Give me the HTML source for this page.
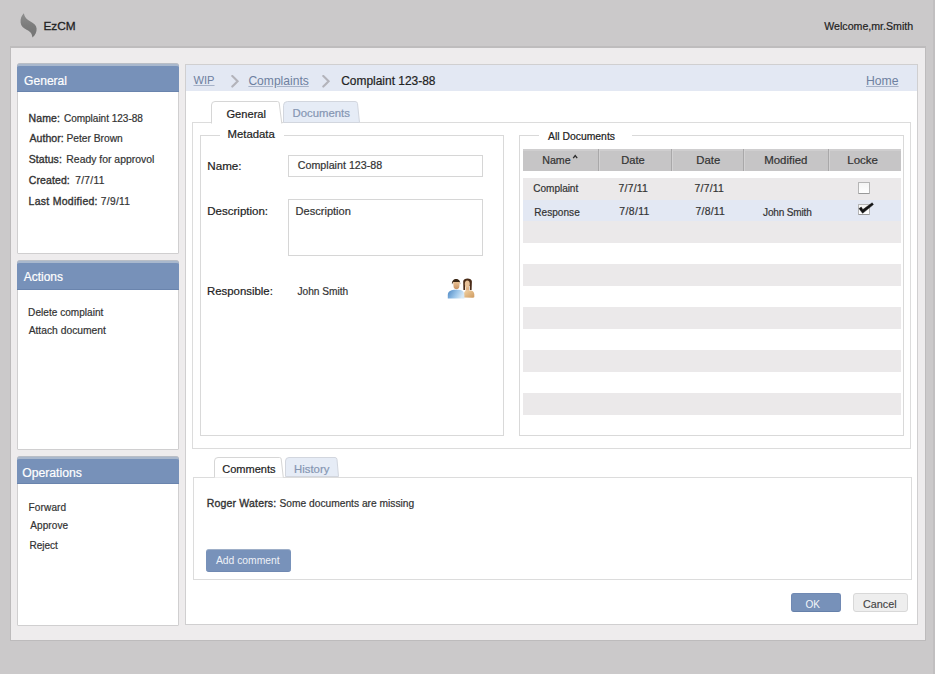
<!DOCTYPE html>
<html><head><meta charset="utf-8">
<style>
*{box-sizing:border-box;margin:0;padding:0}
html,body{width:935px;height:674px;overflow:hidden}
body{background:#cbc9ca;font-family:"Liberation Sans",sans-serif;color:#222;position:relative}
.a{position:absolute}
.t{position:absolute;white-space:nowrap;line-height:1}
.bp{display:inline-block;width:0;height:0}
#main{left:10px;top:46px;width:916px;height:595px;background:#eeeced;border:1px solid #bdbbbc;border-top:2px solid #bebcbd}
.box{position:absolute;background:#fff;border:1px solid #d0cfd0;border-radius:3px 3px 1px 1px}
.hdr{position:absolute;background:#7791b9;border-radius:3px 3px 0 0;border-top:2px solid #a9b8cd;border-bottom:1px solid #6a84ad;box-shadow:0 -1px 0 #b9bec6}
.tabA{position:absolute;background:#fff;border:1px solid #d9d9d9;border-bottom:none;border-radius:4px 4px 0 0}
.tabI{position:absolute;background:#e2e8f2;border:1px solid #d3d6dc;border-bottom:none;border-radius:4px 4px 0 0}
.fs{position:absolute;border:1px solid #d9d9d9}
.stripe{position:absolute;left:523px;width:378px;height:21.5px;background:#ebe9ea}
</style></head><body>
<svg class="a" style="left:0;top:0" width="50" height="45" viewBox="0 0 50 45">
<defs><linearGradient id="lg" x1="0" y1="0" x2="0" y2="1"><stop offset="0" stop-color="#8e8e8e"/><stop offset="0.5" stop-color="#7c7c7c"/><stop offset="1" stop-color="#747474"/></linearGradient></defs>
<path d="M23.8 13.3 C21.5 15.5 20.3 19 20.6 22.5 C20.9 26 23.5 28.3 27 30 C30 31.5 32.3 33.5 32.4 37.6 C35.2 35.5 36.9 32 36.6 28.5 C36.3 25.3 34 23.3 30.5 21.5 C27 19.8 24.5 17.5 23.8 13.3 Z" fill="url(#lg)"/>
</svg>
<div class="a" style="left:933px;top:0;width:2px;height:674px;background:#c1bfc0"></div>
<div id="main" class="a"></div>

<div class="box" style="left:17px;top:63px;width:162px;height:191px"></div>
<div class="hdr" style="left:17px;top:64px;width:162px;height:28px"></div>
<div class="box" style="left:17px;top:260px;width:162px;height:190px"></div>
<div class="hdr" style="left:17px;top:261px;width:162px;height:29px"></div>
<div class="box" style="left:17px;top:456px;width:162px;height:170px"></div>
<div class="hdr" style="left:17px;top:457px;width:162px;height:27px"></div>

<div class="box" style="left:185px;top:64px;width:733px;height:561px;border-radius:0"></div>
<div class="a" style="left:186px;top:65px;width:731px;height:26px;background:#e3e8f3"></div>
<svg class="a" style="left:230px;top:75px" width="11" height="13"><path d="M2.3 1 Q5 3.5 7.6 6.3 Q5 9 2.3 11.6" stroke="#b3b3ba" stroke-width="2.1" fill="none" stroke-linecap="round"/></svg>
<svg class="a" style="left:321px;top:75px" width="11" height="13"><path d="M2.3 1 Q5 3.5 7.6 6.3 Q5 9 2.3 11.6" stroke="#b3b3ba" stroke-width="2.1" fill="none" stroke-linecap="round"/></svg>

<div class="box" style="left:192px;top:122px;width:719px;height:327px;border-radius:0;border-color:#dcdcdc"></div>
<svg class="a" style="left:0;top:0" width="400" height="130">
<path d="M211.5 123.5 L211.5 105 Q211.5 101.5 215 101.5 L277.5 101.5 Q279 101.5 279.2 103 L281.8 123.5" fill="#fff" stroke="#d6d6d6" stroke-width="1"/>
<path d="M283.5 122.5 L283.5 105.5 Q283.5 101.5 287.5 101.5 L355 101.5 Q357.3 101.5 357.5 103.5 L359.5 122.5 Z" fill="#e6ecf6" stroke="#d2d6de" stroke-width="1"/>
</svg>

<div class="fs" style="left:200px;top:135px;width:304px;height:301px"></div>
<div class="a" style="left:220px;top:130px;width:64px;height:10px;background:#fff"></div>
<div class="a" style="left:288px;top:155px;width:195px;height:22px;border:1px solid #d6d6d6"></div>
<div class="a" style="left:288px;top:199px;width:195px;height:57px;border:1px solid #d6d6d6"></div>
<svg class="a" style="left:440px;top:272px" width="40" height="32" viewBox="0 0 40 32">
<defs>
<linearGradient id="mb" x1="0" y1="0" x2="1" y2="0.3"><stop offset="0" stop-color="#4d88c4"/><stop offset="0.6" stop-color="#9cc6ea"/><stop offset="1" stop-color="#d6e8f6"/></linearGradient>
<linearGradient id="wb" x1="0" y1="0" x2="1" y2="1"><stop offset="0" stop-color="#f1d3a6"/><stop offset="1" stop-color="#cf9a5e"/></linearGradient>
<linearGradient id="mf" x1="0" y1="0" x2="0" y2="1"><stop offset="0" stop-color="#eac294"/><stop offset="1" stop-color="#c89262"/></linearGradient>
</defs>
<path d="M23.2 9.5 C23.2 5.6 31.9 5.6 31.9 9.5 L31.6 18 L29.8 18 L29.8 14 L25 14 L25 18 L23.4 18 Z" fill="#4a2c18"/>
<rect x="25.6" y="13" width="3.4" height="5.8" fill="#e2b486"/><ellipse cx="27.3" cy="12" rx="2.5" ry="3.5" fill="#e9c39a"/>
<path d="M24 25.5 L24 21.5 C24 19.2 26 18.3 28.8 18.3 C32.5 18.3 34.3 19.8 34.3 22.5 L34.3 25 C34.3 25.5 33.5 25.8 32 25.8 Z" fill="url(#wb)"/>
<path d="M12 12.5 C11 5.5 21 5 20.2 12.5 L19.6 10.2 L13 10.2 Z" fill="#3b2816"/>
<path d="M13.2 10 L19.7 10 L19.4 14.2 C19.2 16.4 18 17.2 16.5 17.2 C15 17.2 13.6 16.4 13.5 14.2 Z" fill="url(#mf)"/>
<path d="M7.8 26.5 L7.8 23 C7.8 19.8 10.5 18 14 17.8 L19 17.8 C22.5 18 24.4 19.8 24.4 23 L24.4 26.5 Z" fill="url(#mb)"/>
</svg>

<div class="fs" style="left:519px;top:135px;width:385px;height:301px"></div>
<div class="a" style="left:539px;top:130px;width:93px;height:10px;background:#fff"></div>
<div class="a" style="left:523px;top:149px;width:378px;height:22px;background:#c6c5c6;border-top:2px solid #cfcecf"></div>
<div class="a" style="left:598px;top:149px;width:1px;height:22px;background:#a9a8a9"></div><div class="a" style="left:599px;top:149px;width:1px;height:22px;background:#d2d1d2"></div>
<div class="a" style="left:671px;top:149px;width:1px;height:22px;background:#a9a8a9"></div><div class="a" style="left:672px;top:149px;width:1px;height:22px;background:#d2d1d2"></div>
<div class="a" style="left:743px;top:149px;width:1px;height:22px;background:#a9a8a9"></div><div class="a" style="left:744px;top:149px;width:1px;height:22px;background:#d2d1d2"></div>
<div class="a" style="left:828px;top:149px;width:1px;height:22px;background:#a9a8a9"></div><div class="a" style="left:829px;top:149px;width:1px;height:22px;background:#d2d1d2"></div>
<svg class="a" style="left:572px;top:154px" width="7" height="6"><path d="M1.2 4.2 L3.2 1.6 L5.2 4.2" stroke="#2a2a2a" stroke-width="1.3" fill="none"/></svg>

<div class="stripe" style="top:178px"></div>
<div class="stripe" style="top:199.5px;background:#e3e8f3"></div>
<div class="stripe" style="top:221px"></div>
<div class="stripe" style="top:264px"></div>
<div class="stripe" style="top:307px"></div>
<div class="stripe" style="top:350px"></div>
<div class="stripe" style="top:393px"></div>
<div class="a" style="left:858px;top:182px;width:12px;height:12px;border:1px solid #b5b5b5;border-bottom-color:#999;background:linear-gradient(#f4f4f4,#fff);border-radius:1px"></div>
<div class="a" style="left:858px;top:204px;width:12px;height:11px;border:1px solid #b5b5b5;border-bottom-color:#999;background:linear-gradient(#f4f4f4,#fff);border-radius:1px"></div>
<svg class="a" style="left:857px;top:201px" width="18" height="14"><path d="M2 7.6 L4.3 6 L5.8 8.6 L15.2 1.8 L16.4 3.6 L5.6 12.3 Z" fill="#151515" stroke="#151515" stroke-width="0.5" stroke-linejoin="round"/></svg>

<div class="box" style="left:193px;top:477px;width:719px;height:103px;border-radius:0;border-color:#dcdcdc"></div>
<svg class="a" style="left:0;top:440px" width="400" height="45">
<path d="M214.5 37.5 L214.5 21 Q214.5 17.5 218 17.5 L279.5 17.5 Q281 17.5 281.2 19 L283.3 37.5" fill="#fff" stroke="#d6d6d6" stroke-width="1"/>
<path d="M285.5 36.5 L285.5 21 Q285.5 17.5 289 17.5 L335 17.5 Q336.8 17.5 337 19.5 L338.5 36.5 Z" fill="#e6ecf6" stroke="#d2d6de" stroke-width="1"/>
</svg>
<div class="a" style="left:206px;top:549px;width:85px;height:23px;background:#7892ba;border-radius:3px;border-top:1px solid #9eafc8;border-bottom:1px solid #7089b2"></div>
<div class="a" style="left:791px;top:593px;width:50px;height:19px;background:#7791b9;border-radius:3px;border:1px solid #7089b3;border-bottom-color:#6580aa"></div>
<div class="a" style="left:853px;top:593px;width:55px;height:19px;background:#eeeeee;border:1px solid #d8d8d8;border-radius:3px"></div>
<div id="ezcm" class="t" style="left:43.38px;top:21.00px;font-size:11.80px;color:#222;-webkit-text-stroke:0.3px #222">EzCM<span class="bp"></span></div>
<div id="welcome" class="t" style="left:824.28px;top:21.01px;font-size:10.62px;color:#222;-webkit-text-stroke:0.2px #222">Welcome,mr.Smith<span class="bp"></span></div>
<div id="hGeneral" class="t" style="left:24.10px;top:75.00px;font-size:12.07px;color:#fff;-webkit-text-stroke:0.2px #fff">General<span class="bp"></span></div>
<div id="hActions" class="t" style="left:23.74px;top:272.00px;font-size:11.96px;color:#fff;-webkit-text-stroke:0.2px #fff">Actions<span class="bp"></span></div>
<div id="hOps" class="t" style="left:22.20px;top:467.00px;font-size:12.21px;color:#fff;-webkit-text-stroke:0.2px #fff">Operations<span class="bp"></span></div>
<div id="lName" class="t" style="left:28.54px;top:113.01px;font-size:10.50px;letter-spacing:0.10px;color:#333;-webkit-text-stroke:0.35px #333">Name:<span class="bp"></span></div>
<div id="vName" class="t" style="left:63.90px;top:114.01px;font-size:10.05px;letter-spacing:-0.02px;color:#333;-webkit-text-stroke:0.2px #333">Complaint 123-88<span class="bp"></span></div>
<div id="lAuthor" class="t" style="left:29.44px;top:133.01px;font-size:10.50px;letter-spacing:0.07px;color:#333;-webkit-text-stroke:0.35px #333">Author:<span class="bp"></span></div>
<div id="vAuthor" class="t" style="left:66.42px;top:134.00px;font-size:10.25px;color:#333;-webkit-text-stroke:0.2px #333">Peter Brown<span class="bp"></span></div>
<div id="lStatus" class="t" style="left:28.74px;top:154.01px;font-size:10.50px;letter-spacing:0.07px;color:#333;-webkit-text-stroke:0.35px #333">Status:<span class="bp"></span></div>
<div id="vStatus" class="t" style="left:66.36px;top:155.00px;font-size:10.42px;color:#333;-webkit-text-stroke:0.2px #333">Ready for approvol<span class="bp"></span></div>
<div id="lCreated" class="t" style="left:28.74px;top:175.01px;font-size:10.50px;letter-spacing:0.11px;color:#333;-webkit-text-stroke:0.35px #333">Created:<span class="bp"></span></div>
<div id="vCreated" class="t" style="left:75.16px;top:176.00px;font-size:10.20px;letter-spacing:0.32px;color:#333;-webkit-text-stroke:0.2px #333">7/7/11<span class="bp"></span></div>
<div id="lLast" class="t" style="left:28.54px;top:196.01px;font-size:10.50px;letter-spacing:0.28px;color:#333;-webkit-text-stroke:0.35px #333">Last Modified:<span class="bp"></span></div>
<div id="vLast" class="t" style="left:100.82px;top:197.00px;font-size:10.20px;letter-spacing:0.32px;color:#333;-webkit-text-stroke:0.2px #333">7/9/11<span class="bp"></span></div>
<div id="delete" class="t" style="left:28.12px;top:308.00px;font-size:10.05px;letter-spacing:0.03px;color:#333;-webkit-text-stroke:0.2px #333">Delete complaint<span class="bp"></span></div>
<div id="attach" class="t" style="left:28.64px;top:326.01px;font-size:10.30px;color:#333;-webkit-text-stroke:0.2px #333">Attach document<span class="bp"></span></div>
<div id="forward" class="t" style="left:28.54px;top:503.01px;font-size:10.05px;letter-spacing:0.13px;color:#333;-webkit-text-stroke:0.2px #333">Forward<span class="bp"></span></div>
<div id="approve" class="t" style="left:30.24px;top:521.00px;font-size:10.05px;letter-spacing:0.08px;color:#333;-webkit-text-stroke:0.2px #333">Approve<span class="bp"></span></div>
<div id="reject" class="t" style="left:29.54px;top:541.00px;font-size:10.05px;letter-spacing:-0.03px;color:#333;-webkit-text-stroke:0.2px #333">Reject<span class="bp"></span></div>
<div id="wip" class="t" style="left:193.46px;top:75.00px;font-size:11.17px;color:#6e80a0;text-decoration:underline;text-decoration-color:#a6b2c8">WIP<span class="bp"></span></div>
<div id="complaints" class="t" style="left:248.38px;top:75.01px;font-size:12.08px;color:#6e80a0;text-decoration:underline;text-decoration-color:#a6b2c8">Complaints<span class="bp"></span></div>
<div id="crumb" class="t" style="left:341.16px;top:76.01px;font-size:11.96px;color:#222;-webkit-text-stroke:0.2px #222">Complaint 123-88<span class="bp"></span></div>
<div id="home" class="t" style="left:866.00px;top:75.01px;font-size:12.22px;color:#6e80a0;text-decoration:underline;text-decoration-color:#a6b2c8">Home<span class="bp"></span></div>
<div id="tGeneral" class="t" style="left:226.46px;top:109.01px;font-size:11.11px;color:#222;-webkit-text-stroke:0.2px #222">General<span class="bp"></span></div>
<div id="tDocs" class="t" style="left:292.54px;top:108.01px;font-size:11.35px;color:#8596b3;-webkit-text-stroke:0.2px #8596b3">Documents<span class="bp"></span></div>
<div id="metadata" class="t" style="left:227.46px;top:129.00px;font-size:11.37px;color:#222;-webkit-text-stroke:0.2px #222">Metadata<span class="bp"></span></div>
<div id="fName" class="t" style="left:207.26px;top:160.00px;font-size:11.66px;color:#222;-webkit-text-stroke:0.2px #222">Name:<span class="bp"></span></div>
<div id="fNameV" class="t" style="left:297.80px;top:160.01px;font-size:10.70px;color:#333;-webkit-text-stroke:0.2px #333">Complaint 123-88<span class="bp"></span></div>
<div id="fDesc" class="t" style="left:207.26px;top:206.00px;font-size:11.53px;color:#222;-webkit-text-stroke:0.2px #222">Description:<span class="bp"></span></div>
<div id="fDescV" class="t" style="left:295.54px;top:206.00px;font-size:11.07px;color:#333;-webkit-text-stroke:0.2px #333">Description<span class="bp"></span></div>
<div id="fResp" class="t" style="left:207.00px;top:286.00px;font-size:11.40px;color:#222;-webkit-text-stroke:0.2px #222">Responsible:<span class="bp"></span></div>
<div id="fRespV" class="t" style="left:297.44px;top:287.00px;font-size:10.16px;color:#333;-webkit-text-stroke:0.2px #333">John Smith<span class="bp"></span></div>
<div id="allDocs" class="t" style="left:548.08px;top:132.00px;font-size:10.38px;color:#222;-webkit-text-stroke:0.2px #222">All Documents<span class="bp"></span></div>
<div id="thName" class="t" style="left:542.26px;top:155.00px;font-size:10.67px;color:#333;-webkit-text-stroke:0.2px #333">Name<span class="bp"></span></div>
<div id="thDate1" class="t" style="left:621.26px;top:155.00px;font-size:11.15px;color:#333;-webkit-text-stroke:0.2px #333">Date<span class="bp"></span></div>
<div id="thDate2" class="t" style="left:696.34px;top:155.01px;font-size:11.32px;color:#333;-webkit-text-stroke:0.2px #333">Date<span class="bp"></span></div>
<div id="thMod" class="t" style="left:764.20px;top:155.01px;font-size:11.45px;color:#333;-webkit-text-stroke:0.2px #333">Modified<span class="bp"></span></div>
<div id="thLocke" class="t" style="left:847.26px;top:155.01px;font-size:11.52px;color:#333;-webkit-text-stroke:0.2px #333">Locke<span class="bp"></span></div>
<div id="rComplaint" class="t" style="left:533.36px;top:184.01px;font-size:10.05px;letter-spacing:-0.05px;color:#333;-webkit-text-stroke:0.2px #333">Complaint<span class="bp"></span></div>
<div id="r777a" class="t" style="left:618.54px;top:184.00px;font-size:10.40px;letter-spacing:0.24px;color:#333;-webkit-text-stroke:0.2px #333">7/7/11<span class="bp"></span></div>
<div id="r777b" class="t" style="left:694.54px;top:184.00px;font-size:10.40px;letter-spacing:0.24px;color:#333;-webkit-text-stroke:0.2px #333">7/7/11<span class="bp"></span></div>
<div id="rResponse" class="t" style="left:534.28px;top:208.00px;font-size:10.05px;letter-spacing:0.03px;color:#333;-webkit-text-stroke:0.2px #333">Response<span class="bp"></span></div>
<div id="r788a" class="t" style="left:619.26px;top:207.01px;font-size:10.40px;letter-spacing:0.40px;color:#333;-webkit-text-stroke:0.2px #333">7/8/11<span class="bp"></span></div>
<div id="r788b" class="t" style="left:695.54px;top:207.01px;font-size:10.40px;letter-spacing:0.24px;color:#333;-webkit-text-stroke:0.2px #333">7/8/11<span class="bp"></span></div>
<div id="rJohn" class="t" style="left:763.08px;top:208.00px;font-size:10.05px;letter-spacing:-0.17px;color:#333;-webkit-text-stroke:0.2px #333">John Smith<span class="bp"></span></div>
<div id="cComments" class="t" style="left:222.16px;top:464.00px;font-size:11.05px;color:#222;-webkit-text-stroke:0.2px #222">Comments<span class="bp"></span></div>
<div id="cHistory" class="t" style="left:294.08px;top:464.00px;font-size:11.34px;color:#8596b3;-webkit-text-stroke:0.2px #8596b3">History<span class="bp"></span></div>
<div id="cRoger" class="t" style="left:206.84px;top:498.01px;font-size:10.50px;letter-spacing:0.17px;color:#333;-webkit-text-stroke:0.35px #333">Roger Waters:<span class="bp"></span></div>
<div id="cSome" class="t" style="left:279.54px;top:499.00px;font-size:10.22px;color:#333;-webkit-text-stroke:0.2px #333">Some documents are missing<span class="bp"></span></div>
<div id="addc" class="t" style="left:215.90px;top:556.01px;font-size:10.35px;color:#eef1f7">Add comment<span class="bp"></span></div>
<div id="ok" class="t" style="left:805.44px;top:600.00px;font-size:10.05px;color:#f4f6fa">OK<span class="bp"></span></div>
<div id="cancel" class="t" style="left:863.00px;top:599.00px;font-size:10.79px;color:#444;-webkit-text-stroke:0.15px #444">Cancel<span class="bp"></span></div>
</body></html>
